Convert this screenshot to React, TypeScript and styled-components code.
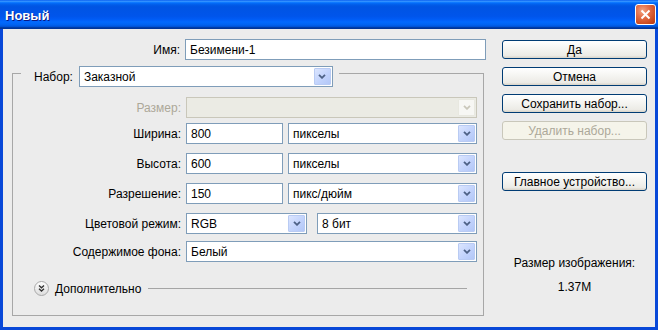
import React from "react";
import styled, { createGlobalStyle } from "styled-components";

const GlobalStyle = createGlobalStyle`
  html, body { margin: 0; padding: 0; background: #ececec; }
  body { font-family: "Liberation Sans", Arial, sans-serif; font-size: 12px; color: #000; }
  * { box-sizing: border-box; }
`;

const Window = styled.div`
  width: 658px;
  height: 330px;
  display: flex;
  flex-direction: column;
  background: #0848d8;
`;

const TitleBar = styled.div`
  height: 29px;
  flex: none;
  display: flex;
  align-items: center;
  justify-content: space-between;
  padding: 0 2px 0 5px;
  background: linear-gradient(
    #0058ee 0%, #3a93ff 4%, #288eff 6%, #127dff 8%, #036ffc 10%, #0262ee 14%,
    #0057e5 20%, #0054e3 24%, #0055eb 56%, #005bf5 66%, #026afe 76%,
    #0062ef 86%, #0052d6 92%, #0040ab 94%, #003092 100%
  );
`;

const Title = styled.span`
  color: #fff;
  font-weight: bold;
  font-size: 13px;
  text-shadow: 1px 1px 0 #0a1883;
  margin-top: 1px;
`;

const CloseButton = styled.div`
  width: 21px;
  height: 21px;
  border: 1px solid #fff;
  border-radius: 3px;
  display: flex;
  align-items: center;
  justify-content: center;
  background: radial-gradient(circle at 35% 30%, #f2a483 0%, #e5704a 35%, #c94a1f 75%, #b53a10 100%);
`;

const Body = styled.div`
  flex: 1;
  margin: 0 3px 3px;
  background: #ececec;
  display: grid;
  grid-template-columns: 487px 1fr;
`;

const LeftColumn = styled.div`
  display: flex;
  flex-direction: column;
  padding-top: 10px;
`;

const NameRow = styled.div`
  display: grid;
  grid-template-columns: 177px 301px;
  column-gap: 5px;
  align-items: center;
`;

const Label = styled.label<{ $disabled?: boolean }>`
  text-align: right;
  white-space: nowrap;
  color: ${(p) => (p.$disabled ? "#aca899" : "#000")};
`;

const TextInput = styled.input<{ $width?: number }>`
  width: ${(p) => (p.$width ? `${p.$width}px` : "100%")};
  height: 21px;
  border: 1px solid #7f9db9;
  background: #fff;
  font: inherit;
  color: #000;
  padding: 0 4px;
  outline: none;
`;

const Group = styled.fieldset`
  margin: 0 0 0 9px;
  width: 472px;
  min-width: 0;
  padding: 0 6px 19px 0;
  border: 1px solid #a7a7a7;
`;

const GroupLegend = styled.legend`
  margin-left: 8px;
  padding: 6px 6px 0 13px;
  display: flex;
  align-items: center;
  gap: 6px;
`;

const Row = styled.div<{ $top: number }>`
  display: grid;
  grid-template-columns: 1fr 291px;
  column-gap: 5px;
  align-items: center;
  margin-top: ${(p) => p.$top}px;
`;

const Fields = styled.div<{ $gap?: number }>`
  display: flex;
  gap: ${(p) => p.$gap ?? 5}px;
`;

const SelectBox = styled.div<{ $width?: number; $disabled?: boolean }>`
  width: ${(p) => (p.$width ? `${p.$width}px` : "100%")};
  height: 21px;
  border: 1px solid ${(p) => (p.$disabled ? "#c9c7ba" : "#7f9db9")};
  background: ${(p) => (p.$disabled ? "#ebebe4" : "#fff")};
  display: flex;
  align-items: center;
  padding: 1px;
`;

const SelectText = styled.span`
  flex: 1;
  padding-left: 3px;
  white-space: nowrap;
  overflow: hidden;
`;

const DropButton = styled.span<{ $disabled?: boolean }>`
  width: 17px;
  height: 17px;
  flex: none;
  display: flex;
  align-items: center;
  justify-content: center;
  border: 1px solid ${(p) => (p.$disabled ? "#e8e8e0" : "#b9cbf3")};
  border-radius: 1px;
  background: ${(p) =>
    p.$disabled
      ? "#f7f7f4"
      : "linear-gradient(135deg, #dbe5fe 0%, #c2d3fc 55%, #b3c7f7 100%)"};
`;

const MoreRow = styled.div`
  display: flex;
  align-items: center;
  margin: 19px 10px 0 21px;
  gap: 6px;
`;

const MoreLine = styled.div`
  flex: 1;
  height: 1px;
  background: #a5a5a5;
  margin-left: 1px;
`;

const RightColumn = styled.div`
  display: flex;
  flex-direction: column;
  padding: 11px 0 0 12px;
  width: 157px;
`;

const Button = styled.button<{ $disabled?: boolean; $top?: number }>`
  width: 145px;
  height: 19px;
  margin-top: ${(p) => p.$top ?? 8}px;
  padding: 0;
  font: inherit;
  border-radius: 3px;
  border: 1px solid ${(p) => (p.$disabled ? "#c9c7ba" : "#003c74")};
  color: ${(p) => (p.$disabled ? "#aca899" : "#000")};
  background: ${(p) =>
    p.$disabled ? "#f5f4ea" : "linear-gradient(#ffffff 0%, #f6f6f3 40%, #ecebe6 85%, #d8d3c8 100%)"};
`;

const SizeInfo = styled.div`
  margin-top: 65px;
  width: 145px;
  display: flex;
  flex-direction: column;
  align-items: center;
  gap: 10px;
  line-height: 14px;
`;

function Chevron({ disabled }: { disabled?: boolean }) {
  return (
    <svg width="8" height="5" viewBox="0 0 8 5">
      <path
        d="M1 0.8 L4 3.8 L7 0.8"
        fill="none"
        stroke={disabled ? "#c9c7ba" : "#4d6185"}
        strokeWidth="1.8"
      />
    </svg>
  );
}

function Select({ value, width, disabled }: { value?: string; width?: number; disabled?: boolean }) {
  return (
    <SelectBox $width={width} $disabled={disabled}>
      <SelectText>{value}</SelectText>
      <DropButton $disabled={disabled}>
        <Chevron disabled={disabled} />
      </DropButton>
    </SelectBox>
  );
}

function MoreIcon() {
  return (
    <svg width="15" height="15" viewBox="0 0 15 15">
      <defs>
        <linearGradient id="moreg" x1="0" y1="0" x2="0" y2="1">
          <stop offset="0" stopColor="#ffffff" />
          <stop offset="1" stopColor="#dcdcdc" />
        </linearGradient>
      </defs>
      <circle cx="7.5" cy="7.5" r="7" fill="url(#moreg)" stroke="#a8a8a8" />
      <path d="M5 4.5 L7.5 6.8 L10 4.5 M5 7.8 L7.5 10.1 L10 7.8" fill="none" stroke="#333" strokeWidth="1.3" />
    </svg>
  );
}

export default function App() {
  return (
    <>
      <GlobalStyle />
      <Window>
        <TitleBar>
          <Title>Новый</Title>
          <CloseButton>
            <svg width="11" height="11" viewBox="0 0 11 11">
              <path d="M1.5 1.5 L9.5 9.5 M9.5 1.5 L1.5 9.5" stroke="#fff" strokeWidth="2" />
            </svg>
          </CloseButton>
        </TitleBar>
        <Body>
          <LeftColumn>
            <NameRow>
              <Label>Имя:</Label>
              <TextInput readOnly value="Безимени-1" />
            </NameRow>
            <Group>
              <GroupLegend>
                <span>Набор:</span>
                <Select value="Заказной" width={254} />
              </GroupLegend>
              <Row $top={10}>
                <Label $disabled>Размер:</Label>
                <Select disabled />
              </Row>
              <Row $top={5}>
                <Label>Ширина:</Label>
                <Fields>
                  <TextInput readOnly value="800" $width={97} />
                  <Select value="пикселы" width={189} />
                </Fields>
              </Row>
              <Row $top={9}>
                <Label>Высота:</Label>
                <Fields>
                  <TextInput readOnly value="600" $width={97} />
                  <Select value="пикселы" width={189} />
                </Fields>
              </Row>
              <Row $top={9}>
                <Label>Разрешение:</Label>
                <Fields>
                  <TextInput readOnly value="150" $width={97} />
                  <Select value="пикс/дюйм" width={189} />
                </Fields>
              </Row>
              <Row $top={9}>
                <Label>Цветовой режим:</Label>
                <Fields $gap={10}>
                  <Select value="RGB" width={121} />
                  <Select value="8 бит" width={160} />
                </Fields>
              </Row>
              <Row $top={7}>
                <Label>Содержимое фона:</Label>
                <Select value="Белый" />
              </Row>
              <MoreRow>
                <MoreIcon />
                <span>Дополнительно</span>
                <MoreLine />
              </MoreRow>
            </Group>
          </LeftColumn>
          <RightColumn>
            <Button $top={0}>Да</Button>
            <Button>Отмена</Button>
            <Button>Сохранить набор...</Button>
            <Button $disabled disabled>
              Удалить набор...
            </Button>
            <Button $top={32}>Главное устройство...</Button>
            <SizeInfo>
              <span>Размер изображения:</span>
              <span>1.37M</span>
            </SizeInfo>
          </RightColumn>
        </Body>
      </Window>
    </>
  );
}
